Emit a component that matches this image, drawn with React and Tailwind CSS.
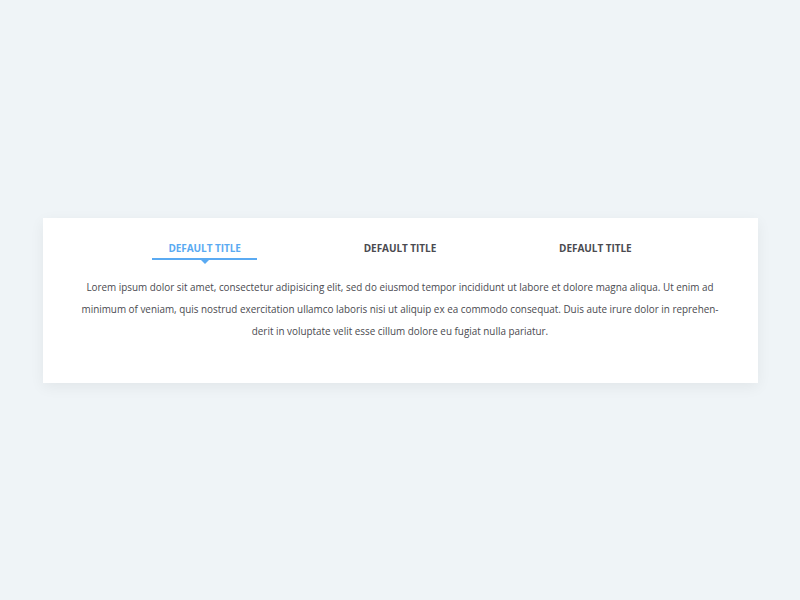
export default function App() {
  const tabs = ["DEFAULT TITLE", "DEFAULT TITLE", "DEFAULT TITLE"];
  return (
    <div className="w-[800px] h-[600px] bg-[#eff4f7] flex items-center justify-center" style={{ fontFamily: '"Open Sans", sans-serif' }}>
      <div className="w-[715px] h-[165px] bg-white shadow-[0_4px_14px_rgba(0,0,0,0.06)] flex flex-col items-center pt-[22px]">
        <div className="flex w-[586px]">
          {tabs.map((t, i) => (
            <div key={i} className="flex-1 flex flex-col items-center">
              <div className={`text-[10px] font-bold tracking-[-0.05px] leading-[16px] h-[16px] ${i === 0 ? "text-[#5aaaf2]" : "text-[#4a4a4f]"}`}>{t}</div>
              {i === 0 ? (
                <div className="relative mt-[2px] w-[105px] h-[2px] bg-[#5aaaf2]">
                  <div className="absolute left-1/2 -translate-x-1/2 top-[2px] w-0 h-0 border-l-[4px] border-r-[4px] border-t-[4px] border-l-transparent border-r-transparent border-t-[#5aaaf2]" />
                </div>
              ) : (
                <div className="mt-[2px] h-[2px]" />
              )}
            </div>
          ))}
        </div>
        <p className="mt-[16px] w-[652px] text-center text-[9.9px] leading-[22px] text-[#4a4a50]">
          Lorem ipsum dolor sit amet, consectetur adipisicing elit, sed do eiusmod tempor incididunt ut labore et dolore magna aliqua. Ut enim ad minimum of veniam, quis nostrud exercitation ullamco laboris nisi ut aliquip ex ea commodo consequat. Duis aute irure dolor in reprehen-derit in voluptate velit esse cillum dolore eu fugiat nulla pariatur.
        </p>
      </div>
    </div>
  );
}
